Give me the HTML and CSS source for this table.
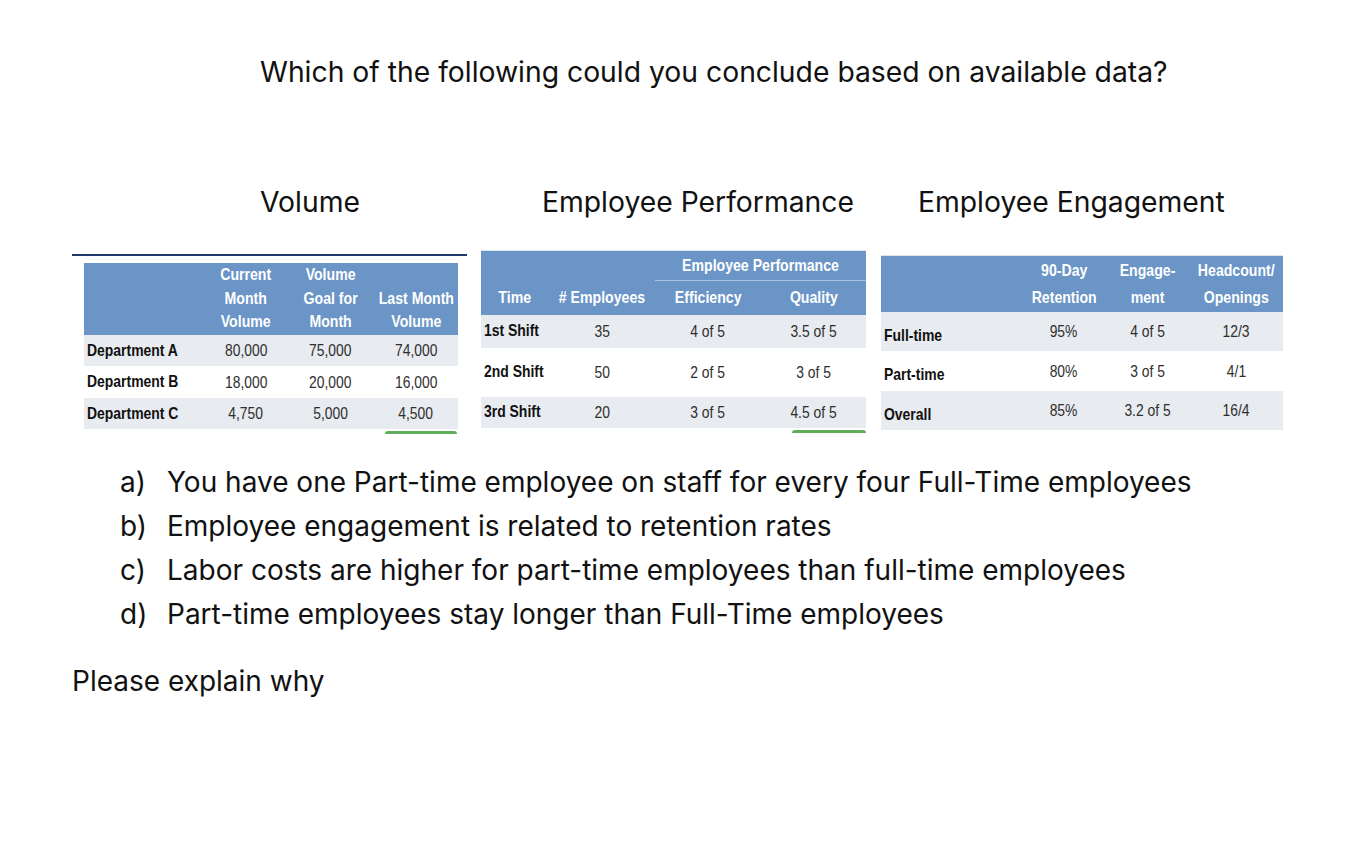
FILE: index.html
```html
<!DOCTYPE html>
<html lang="en">
<head>
<meta charset="utf-8">
<title>Which of the following could you conclude</title>
<link rel="stylesheet" href="styles.css">
</head>
<body>
<div class="page">
  <h1 class="question">Which of the following could you conclude based on available data?</h1>

  <div class="panels">
    <section class="panel panel-volume">
      <h2 class="panel-title">Volume</h2>
      <div class="rule"></div>
      <table class="data t-volume">
        <colgroup><col class="c1"><col class="c2"><col class="c3"><col class="c4"></colgroup>
        <thead>
          <tr class="head"><th></th><th><span>Current<br>Month<br>Volume</span></th><th><span>Volume<br>Goal for<br>Month</span></th><th><span>Last Month<br>Volume</span></th></tr>
        </thead>
        <tbody>
          <tr class="shade r1"><td class="lbl"><span>Department A</span></td><td><span>80,000</span></td><td><span>75,000</span></td><td><span>74,000</span></td></tr>
          <tr class="r2"><td class="lbl"><span>Department B</span></td><td><span>18,000</span></td><td><span>20,000</span></td><td><span>16,000</span></td></tr>
          <tr class="shade r3"><td class="lbl"><span>Department C</span></td><td><span>4,750</span></td><td><span>5,000</span></td><td><span>4,500</span></td></tr>
        </tbody>
      </table>
      <div class="green green-volume"></div>
    </section>

    <section class="panel panel-perf">
      <h2 class="panel-title">Employee Performance</h2>
      <table class="data t-perf">
        <colgroup><col class="c1"><col class="c2"><col class="c3"><col class="c4"></colgroup>
        <thead>
          <tr class="head h-top"><th></th><th></th><th colspan="2" class="group"><span>Employee Performance</span></th></tr>
          <tr class="head h-sub"><th><span>Time</span></th><th><span># Employees</span></th><th><span>Efficiency</span></th><th><span>Quality</span></th></tr>
        </thead>
        <tbody>
          <tr class="shade r1"><td class="lbl"><span>1st Shift</span></td><td><span>35</span></td><td><span>4 of 5</span></td><td><span>3.5 of 5</span></td></tr>
          <tr class="r2"><td class="lbl"><span>2nd Shift</span></td><td><span>50</span></td><td><span>2 of 5</span></td><td><span>3 of 5</span></td></tr>
          <tr class="shade r3"><td class="lbl"><span>3rd Shift</span></td><td><span>20</span></td><td><span>3 of 5</span></td><td><span>4.5 of 5</span></td></tr>
        </tbody>
      </table>
      <div class="green green-perf"></div>
    </section>

    <section class="panel panel-eng">
      <h2 class="panel-title">Employee Engagement</h2>
      <table class="data t-eng">
        <colgroup><col class="c1"><col class="c2"><col class="c3"><col class="c4"></colgroup>
        <thead>
          <tr class="head"><th></th><th><span>90-Day<br>Retention</span></th><th><span>Engage-<br>ment</span></th><th><span>Headcount/<br>Openings</span></th></tr>
        </thead>
        <tbody>
          <tr class="shade r1"><td class="lbl"><span>Full-time</span></td><td><span>95%</span></td><td><span>4 of 5</span></td><td><span>12/3</span></td></tr>
          <tr class="r2"><td class="lbl"><span>Part-time</span></td><td><span>80%</span></td><td><span>3 of 5</span></td><td><span>4/1</span></td></tr>
          <tr class="shade r3"><td class="lbl"><span>Overall</span></td><td><span>85%</span></td><td><span>3.2 of 5</span></td><td><span>16/4</span></td></tr>
        </tbody>
      </table>
    </section>
  </div>

  <ol class="options">
    <li><span class="mark">a)</span><span>You have one Part-time employee on staff for every four Full-Time employees</span></li>
    <li><span class="mark">b)</span><span>Employee engagement is related to retention rates</span></li>
    <li><span class="mark">c)</span><span>Labor costs are higher for part-time employees than full-time employees</span></li>
    <li><span class="mark">d)</span><span>Part-time employees stay longer than Full-Time employees</span></li>
  </ol>

  <p class="explain">Please explain why</p>
</div>
</body>
</html>
```

FILE: styles.css
```css
html, body {
  margin: 0;
  padding: 0;
  background: #ffffff;
}

body {
  font-family: Inter, "Open Sans", "Liberation Sans", sans-serif;
  color: #111111;
}

.page {
  width: 1354px;
}

.question {
  margin: 0;
  padding: 52px 0 0 260px;
  font-size: 28.3px;
  font-weight: 400;
  line-height: 40px;
}

.panels {
  display: flex;
  align-items: flex-start;
  margin-top: 90px;
  padding-left: 72px;
}

.panel {
  display: flex;
  flex-direction: column;
}

.panel-title {
  margin: 0;
  font-size: 28.3px;
  font-weight: 400;
  line-height: 40px;
  white-space: nowrap;
}

.panel-volume { width: 395px; }
.panel-volume .panel-title { padding-left: 188px; }

.panel-perf { width: 385px; margin-left: 14px; }
.panel-perf .panel-title { padding-left: 61px; }

.panel-eng { width: 402px; margin-left: 15px; }
.panel-eng .panel-title { padding-left: 37px; }

.rule {
  margin-top: 32px;
  height: 2px;
  background: #1f3a68;
}

/* tables */
.data {
  border-collapse: collapse;
  table-layout: fixed;
  font-family: "Liberation Sans", Arial, sans-serif;
  font-size: 16.5px;
}

.data th, .data td {
  padding: 0;
  text-align: center;
  white-space: nowrap;
  overflow: visible;
}

/* narrow (condensed) rendering of the table text */
.data th > span, .data td > span {
  display: inline-block;
  transform: scaleX(0.84);
  transform-origin: center center;
  margin: 0 -14px;
}

.data td.lbl > span {
  transform-origin: left center;
  margin: 0 -20px 0 0;
  transform: scaleX(0.82);
}

.data th {
  color: #ffffff;
  font-weight: 700;
  font-size: 17px;
}

.data th > span {
  transform: scaleX(0.83);
}

.data td {
  color: #2e2e2e;
  font-weight: 400;
}

.data td.lbl {
  text-align: left;
  padding-left: 3px;
  color: #111111;
  font-weight: 700;
  font-size: 17px;
}

.head { background: #6a95c6; }
.shade { background: #e8ebf0; }

/* volume table */
.t-volume {
  margin: 7px 0 0 12px;
  width: 374px;
}
.t-volume .c1 { width: 121px; }
.t-volume .c2 { width: 82px; }
.t-volume .c3 { width: 87px; }
.t-volume .c4 { width: 84px; }
.t-volume .head { height: 71px; }
.t-volume .head th {
  line-height: 23.5px;
  vertical-align: bottom;
  padding-bottom: 1px;
}
.t-volume .r1 { height: 31px; }
.t-volume .r2 { height: 32px; }
.t-volume .r3 { height: 31px; }
.t-volume td { padding-top: 1px; }

/* performance table */
.t-perf {
  margin-top: 28px;
  width: 385px;
  border-top: 1px solid #dfe3ea;
}
.t-perf .c1 { width: 68px; }
.t-perf .c2 { width: 106px; }
.t-perf .c3 { width: 106px; }
.t-perf .c4 { width: 105px; }
.t-perf .h-top { height: 30px; }
.t-perf .h-top th {
  line-height: 26px;
  vertical-align: middle;
}
.t-perf .h-top th.group {
  border-bottom: 1px solid #a8c1df;
}
.t-perf .h-sub { height: 34px; }
.t-perf .h-sub th { vertical-align: middle; padding-top: 1px; }
.t-perf .r1 { height: 33px; }
.t-perf .r2 { height: 49px; }
.t-perf .r3 { height: 31px; }

/* engagement table */
.t-eng {
  margin-top: 33px;
  width: 402px;
  border-top: 1px solid #dfe3ea;
}
.t-eng .c1 { width: 142px; }
.t-eng .c2 { width: 82px; }
.t-eng .c3 { width: 85px; }
.t-eng .c4 { width: 93px; }
.t-eng .head { height: 56px; }
.t-eng .head th {
  line-height: 27px;
  vertical-align: middle;
}
.t-eng .r1 { height: 39px; }
.t-eng .r2 { height: 40px; }
.t-eng .r3 { height: 39px; }
.t-eng td { padding-top: 1px; }
.t-eng td.lbl { padding-top: 9px; }

/* green tab accents */
.green {
  height: 3px;
  margin-top: 2px;
  background: #5fae5c;
  border-radius: 3px 3px 0 0;
}
.green-volume { width: 72px; margin-left: 313px; }
.green-perf { width: 74px; margin-left: 311px; }

/* options */
.options {
  list-style: none;
  margin: 26px 0 0 0;
  padding: 0 0 0 120px;
  font-size: 28px;
  line-height: 44px;
}

.options li {
  display: flex;
  white-space: nowrap;
}

.options .mark {
  width: 47px;
  flex: none;
}

.explain {
  margin: 25px 0 0 72px;
  font-size: 28px;
  line-height: 40px;
}
```
